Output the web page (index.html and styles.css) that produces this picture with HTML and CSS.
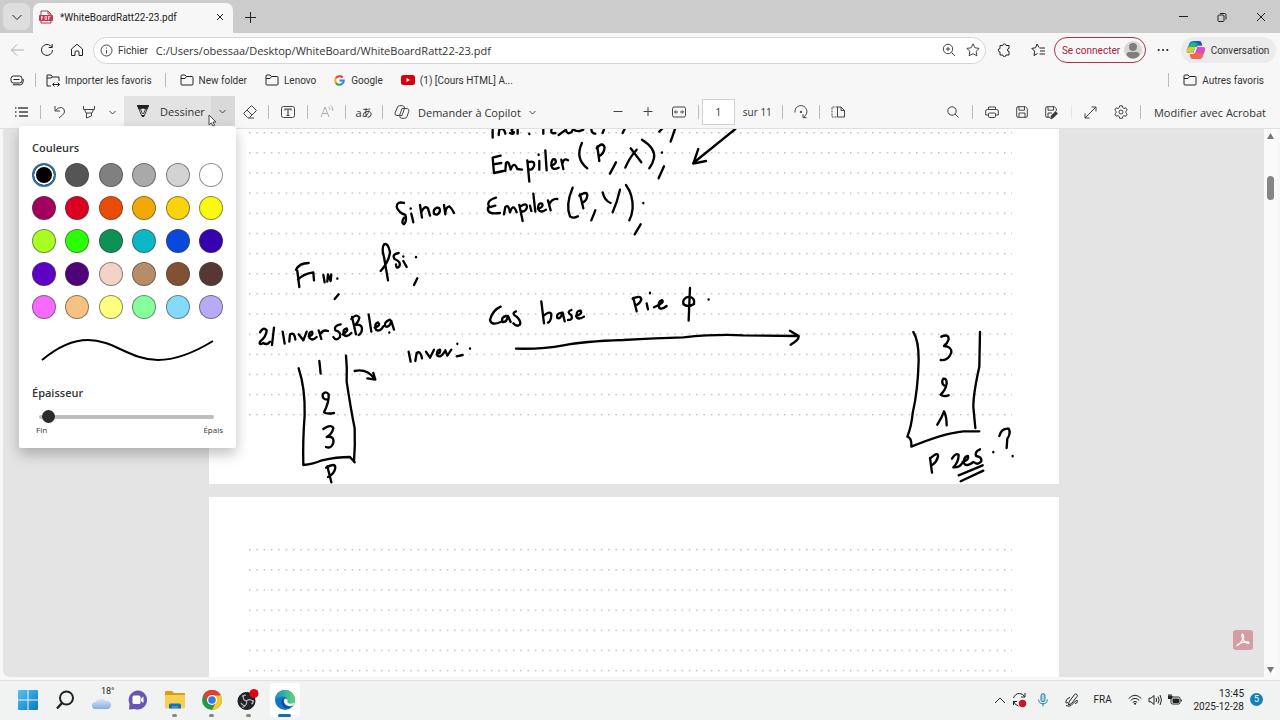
FILE: index.html
```html
<!DOCTYPE html>
<html lang="fr">
<head>
  <meta charset="UTF-8">
  <meta name="viewport" content="width=device-width, initial-scale=1.0">
  <title>WhiteBoardRatt22-23.pdf</title>
  <link rel="stylesheet" href="styles.css">
</head>
<body>

<!-- Tab strip -->
<header class="tabs">
  <button class="tab-menu" aria-label="Onglets"><svg class="dark" width="12" height="12" viewBox="0 0 12 12"><path d="M1.500 4L6 8.500 10.500 4"/></svg></button>
  <div class="tab">
    <svg width="14" height="14" viewBox="0 0 14 14"><path d="M2 1h7l3 3v9H2z" fill="#fff" stroke="#a33a48"/><path d="M9 1v3h3" stroke="#a33a48"/><rect x="0" y="5" width="14" height="6" rx="1" fill="#c9354a" stroke="none"/><path d="M2.500 10V6.500h1v1.500h-1M6 6.500v3h1.500v-3zM9.500 10V6.500h2M9.500 8h1.500" stroke="#fff" stroke-width=".7"/></svg>
    <span class="tab-title">*WhiteBoardRatt22-23.pdf</span>
    <button class="icon-btn small" aria-label="Fermer l'onglet"><svg class="dark" width="8" height="8" viewBox="0 0 8 8"><path d="M1 1l6 6M7 1l-6 6"/></svg></button>
  </div>
  <button class="icon-btn new-tab" aria-label="Nouvel onglet"><svg class="dark" width="13" height="13" viewBox="0 0 13 13"><path d="M6.500 1v11M1 6.500h11"/></svg></button>
  <div class="window-buttons">
    <button aria-label="Réduire"><svg class="dark" width="10" height="10" viewBox="0 0 10 10"><path d="M1 4.500h9"/></svg></button>
    <button aria-label="Restaurer"><svg class="dark" width="10" height="10" viewBox="0 0 10 10"><path d="M3 1.500h4.500a1.500 1.500 0 0 1 1.500 1.500v4.500"/><rect x="1" y="3" width="6" height="6.500" rx="1"/></svg></button>
    <button aria-label="Fermer"><svg class="dark" width="10" height="10" viewBox="0 0 10 10"><path d="M1 1l8 8M9 1l-8 8"/></svg></button>
  </div>
</header>

<!-- Address bar -->
<div class="nav">
  <button class="icon-btn disabled" aria-label="Précédent"><svg width="14" height="14" viewBox="0 0 14 14"><path d="M14 7H1.500M7 1.500L1.500 7 7 12.500"/></svg></button>
  <button class="icon-btn" aria-label="Actualiser"><svg class="dark" width="14" height="14" viewBox="0 0 14 14"><path d="M12.500 7A5.500 5.500 0 1 1 10.500 2.700L12 4.200M12.200 1v3.500H8.700"/></svg></button>
  <button class="icon-btn" aria-label="Accueil"><svg class="dark" width="14" height="14" viewBox="0 0 14 14"><path d="M1.500 6L7 1.200 12.500 6v6.500H9V9a1 1 0 0 0-1-1H6a1 1 0 0 0-1 1v3.500H1.500z" stroke-linejoin="round"/></svg></button>
  <div class="address">
    <svg width="13" height="13" viewBox="0 0 13 13"><circle cx="6.500" cy="6.500" r="5.500"/><path d="M6.500 6v3.500M6.500 3.500v1"/></svg>
    <label class="scheme" for="url">Fichier</label>
    <input id="url" class="url" type="text" value="C:/Users/obessaa/Desktop/WhiteBoard/WhiteBoardRatt22-23.pdf">
    <button class="icon-btn narrow" aria-label="Zoom"><svg width="14" height="14" viewBox="0 0 14 14"><circle cx="6" cy="6" r="4.700"/><path d="M9.500 9.500L13 13M6 3.800v4.400M3.800 6h4.400"/></svg></button>
    <button class="icon-btn narrow" aria-label="Ajouter aux favoris"><svg width="14" height="14" viewBox="0 0 14 14"><path d="M7 .8l1.900 4 4.300.6-3.100 3 .8 4.400L7 10.700l-3.900 2.100.8-4.400-3.100-3 4.300-.6z" stroke-linejoin="round"/></svg></button>
  </div>
  <button class="icon-btn" aria-label="Extensions"><svg class="dark" width="14" height="14" viewBox="0 0 14 14"><path d="M4 2.500h1.800a1.600 1.600 0 0 1 3.200 0H12V5.500a1.500 1.500 0 0 0 0 3V12H9a1.600 1.600 0 0 1-3.200 0H3V9a1.700 1.700 0 0 1 0-3.400V2.500z" stroke-linejoin="round"/></svg></button>
  <button class="icon-btn favorites" aria-label="Favoris"><svg class="dark" width="14" height="14" viewBox="0 0 14 14"><path d="M8 4.500L6 1 4.500 4.800.8 5.400l2.800 2.800-.6 4.300 3.500-2M8.500 5H14M9 8h5M8.500 11H14" stroke-linejoin="round"/></svg></button>
  <button class="sign-in">Se connecter
    <svg width="18" height="18" viewBox="0 0 18 18"><circle cx="9" cy="9" r="9" fill="#d8d5d2" stroke="none"/><circle cx="9" cy="6" r="4" fill="#807d7a" stroke="none"/><path d="M2.500 14a3 3 0 0 1 3-3h7a3 3 0 0 1 3 3Q13 17.500 9 17.500T2.500 14z" fill="#807d7a" stroke="none"/></svg>
  </button>
  <button class="icon-btn more" aria-label="Plus"><svg width="12" height="4" viewBox="0 0 12 4"><g fill="#222" stroke="none"><circle cx="1.700" cy="2" r="1.100"/><circle cx="6" cy="2" r="1.100"/><circle cx="10.300" cy="2" r="1.100"/></g></svg></button>
  <button class="chat">
    <svg width="20" height="20" viewBox="0 0 20 20"><g stroke="none"><path d="M7 1h6q2 0 2.500 2l.7 2.500h-3q-2 0-2.500 2L9 13H3Q0 13 1 9.500L3.500 3Q4.500 1 7 1z" fill="#1686d9"/><path d="M3.500 5L6 3h5l-2.500 9H3Q0 12 1 9z" fill="#28b57c"/><path d="M2 12.500Q4 13 7 13l1-3 1-3H4L1.500 8Q0 12 2 12.500z" fill="#e5c531"/><path d="M13 19H7q-2 0-2.500-2L3.800 14.500h3q2 0 2.500-2L11 7h6q3 0 2 3.500L16.500 17q-1 2-3.500 2z" fill="#d74dc4"/><path d="M13 19H7q-2 0-2.500-2L3.800 14h3q2 0 2.500-2l3 1 5 .8L16.500 17q-1 2-3.500 2z" fill="#f2684c"/><path d="M7 1h6q2 0 2.500 2l.7 2.500h-3L11 3z" fill="#2453c8"/><path d="M11 7l-2 6H7.500l2-6z" fill="#fff"/></g></svg>
    Conversation
  </button>
</div>

<!-- Bookmarks -->
<nav class="bookmarks">
  <button class="icon-btn" aria-label="Espaces"><svg class="dark" width="14" height="11" viewBox="0 0 14 11"><rect x="1" y="1" width="11" height="7" rx="2.500"/><path d="M3.500 4.500h6M3 9.800h7.500q2.700-.5 2.700-3.500V4"/></svg></button>
  <span class="sep"></span>
  <a class="import" href="#"><svg class="dark" width="14" height="13" viewBox="0 0 14 13"><path d="M5 12H1V1h4l1.500 2H13v4M1 4h4l1.500-1M13.500 10.500H7M8.500 8.500l-2 2 2 2M11.500 8.500l2 2-2 2"/></svg>Importer les favoris</a>
  <span class="sep"></span>
  <a class="folder" href="#"><svg class="dark" width="14" height="12" viewBox="0 0 14 12"><path d="M1 2a1 1 0 0 1 1-1h3l1.500 1.500H12a1 1 0 0 1 1 1V10a1 1 0 0 1-1 1H2a1 1 0 0 1-1-1zM1 4.500h4l1.500-2" stroke-linejoin="round"/></svg>New folder</a>
  <a href="#"><svg class="dark" width="14" height="12" viewBox="0 0 14 12"><path d="M1 2a1 1 0 0 1 1-1h3l1.500 1.500H12a1 1 0 0 1 1 1V10a1 1 0 0 1-1 1H2a1 1 0 0 1-1-1zM1 4.500h4l1.500-2" stroke-linejoin="round"/></svg>Lenovo</a>
  <a class="google" href="#"><svg width="11" height="11" viewBox="0 0 12 12" stroke-width="2.200"><path d="M9.500 2.700A4.700 4.700 0 0 0 2 3.600" stroke="#e34133"/><path d="M2 3.600a4.700 4.700 0 0 0 0 4.800" stroke="#f3b605"/><path d="M2 8.400a4.700 4.700 0 0 0 7 1.200" stroke="#32a350"/><path d="M9 9.600A4.700 4.700 0 0 0 10.700 6H6" stroke="#3d7de8"/></svg>Google</a>
  <a class="youtube" href="#"><svg width="14" height="10" viewBox="0 0 14 10"><rect width="14" height="10" rx="2.500" fill="#d9000d" stroke="none"/><path d="M5.500 3v4L9 5z" fill="#fff" stroke="none"/></svg>(1) [Cours HTML] A...</a>
  <span class="sep last"></span>
  <a class="others" href="#"><svg class="dark" width="14" height="12" viewBox="0 0 14 12"><path d="M1 2a1 1 0 0 1 1-1h3l1.500 1.500H12a1 1 0 0 1 1 1V10a1 1 0 0 1-1 1H2a1 1 0 0 1-1-1zM1 4.500h4l1.500-2" stroke-linejoin="round"/></svg>Autres favoris</a>
</nav>

<!-- PDF toolbar -->
<div class="pdf-bar">
  <div class="group">
    <button class="tool" aria-label="Sommaire"><svg width="14" height="12" viewBox="0 0 14 12"><path d="M4 2h10M5 6h9M5 10h9M1 2h1.500M1 6h1.500M1 10h1.500" stroke-width="1.300"/></svg></button>
    <span class="sep"></span>
    <button class="tool" aria-label="Annuler"><svg width="14" height="14" viewBox="0 0 14 14"><path d="M2 1v5h5M2.500 5.500Q5 2 8.500 2.500q3.500 1 3 4.500-.5 1.500-2 3L6 13"/></svg></button>
    <button class="tool pen" aria-label="Surligner"><svg width="14" height="14" viewBox="0 0 14 14"><path d="M1.500 1v3.500h11V1M2.500 4.500L4 8h6l1.500-3.500M4.500 8v5l5-2V8" stroke-linejoin="round"/></svg></button>
    <button class="chevron" aria-label="Options de surlignage"><svg width="7" height="5" viewBox="0 0 7 5"><path d="M.5 1l3 3 3-3"/></svg></button>
    <button class="draw">
      <svg width="14" height="14" viewBox="0 0 14 14"><path d="M1.500 1.500h11L8 12.500H6zM4.500 5l2 5M9.500 5l-2 5"/><path d="M1.500 1.500h11L11 5Q7 3 3 5z" fill="#222" stroke="#222"/><path d="M6 12h2" stroke="#222" stroke-width="2"/></svg>
      Dessiner
      <span class="draw-more"><svg width="7" height="5" viewBox="0 0 7 5"><path d="M.5 1l3 3 3-3"/></svg></span>
    </button>
    <button class="tool" aria-label="Gomme"><svg width="14" height="14" viewBox="0 0 14 14"><path d="M9 1l4 4q.5.500 0 1L6.500 12.500q-1 1-2 0L1 9q-.5-.5 0-1l7-7q.5-.5 1 0zM4 5l5 5M5.500 13H11" stroke-linejoin="round"/></svg></button>
    <span class="sep tight"></span>
    <button class="tool" aria-label="Texte"><svg width="14" height="12" viewBox="0 0 14 12"><rect x=".5" y=".5" width="13" height="11" rx="2"/><path d="M4 4.500V3h6v1.500M7 3v6.500M5.500 9.500h3" stroke-width="1.200"/></svg></button>
    <span class="sep"></span>
    <button class="tool disabled" aria-label="Lecture à voix haute"><svg width="14" height="14" viewBox="0 0 14 14"><path d="M1 12l4-10 4 10M2.500 8.500h5M8.500 2q1.500 1 1.500 3M10.500.5Q13 2.500 13 6"/></svg></button>
    <span class="sep tight"></span>
    <button class="tool translate" aria-label="Traduire">aあ</button>
    <span class="sep"></span>
    <button class="copilot">
      <svg width="16" height="14" viewBox="0 0 16 14"><path d="M10.500 3L10 1.500Q9.700.7 8.500.7H5.500Q4 .7 3.500 2L1 8Q.5 10.500 3 10.500h2.500L8 3.500H12q3.500 0 2.800 2.800L13 11.500Q12.500 13.300 10.500 13.300H7.500Q6.300 13.300 6 12l-.5-1.500M8 10.500L10.500 3.500M8 10.500H6" stroke-linejoin="round"/></svg>
      Demander à Copilot
      <svg width="7" height="5" viewBox="0 0 7 5"><path d="M.5 1l3 3 3-3"/></svg>
    </button>
  </div>
  <div class="group paging">
    <button class="tool" aria-label="Zoom arrière"><svg width="10" height="10" viewBox="0 0 10 10"><path d="M.5 4.500h9"/></svg></button>
    <button class="tool" aria-label="Zoom avant"><svg width="10" height="10" viewBox="0 0 10 10"><path d="M.5 4.500h9M5 0v9"/></svg></button>
    <button class="tool fit" aria-label="Ajuster à la largeur"><svg width="14" height="12" viewBox="0 0 14 12"><rect x=".5" y="1" width="13" height="10" rx="1.500"/><path d="M2.500 6H6M8 6h3.500M4.200 4.300L2.500 6l1.700 1.700M9.800 4.300L11.500 6 9.800 7.700"/></svg></button>
    <span class="sep"></span>
    <input class="page-number" type="text" value="1" id="page">
    <label class="page-count" for="page">sur 11</label>
    <span class="sep"></span>
    <button class="tool turn" aria-label="Pivoter"><svg width="14" height="14" viewBox="0 0 14 14"><path d="M1 7.500A6 6 0 1 1 9.500 12M12.500 12.700H9V9.200"/><circle cx="7" cy="7" r=".8" fill="#333"/></svg></button>
    <span class="sep"></span>
    <button class="tool turn" aria-label="Mode Page"><svg width="14" height="12" viewBox="0 0 14 12"><path d="M6.500 1H1v10h5.500" stroke-dasharray="2 1"/><path d="M6.500 1H10l3.500 3.500V11h-7zM10 1v3.500h3.500"/></svg></button>
  </div>
  <div class="group actions">
    <button class="tool" aria-label="Rechercher"><svg width="12" height="12" viewBox="0 0 12 12"><circle cx="5" cy="5" r="4.200"/><path d="M8 8l3.500 3.500"/></svg></button>
    <span class="sep"></span>
    <button class="tool" aria-label="Imprimer"><svg width="14" height="12" viewBox="0 0 14 12"><path d="M3.500 3.500V1h7v2.500M3 9H.7V5q0-1.500 1.500-1.500h9.600q1.500 0 1.500 1.500v4H11"/><rect x="3.500" y="7" width="7" height="4.500" rx="1"/></svg></button>
    <button class="tool" aria-label="Enregistrer"><svg width="12" height="12" viewBox="0 0 12 12"><path d="M.7 2A1.300 1.300 0 0 1 2 .7h7.500l1.800 2V10a1.300 1.300 0 0 1-1.300 1.300H2A1.300 1.300 0 0 1 .7 10zM3 .7v3.500h5.500V.7M3 11.300V7h6v4.300"/></svg></button>
    <button class="tool" aria-label="Enregistrer sous"><svg width="13" height="13" viewBox="0 0 13 13"><path d="M5 11.300H2A1.300 1.300 0 0 1 .7 10V2A1.300 1.300 0 0 1 2 .7h7.500l1.800 2V5M3 .7v3.500h5.500V.7M3 11.300V7h4"/><path d="M6 12.500l.5-2.500 4-4 1.500 1.500-4 4z" fill="#222" stroke-width="1.500"/></svg></button>
    <span class="sep faint"></span>
    <button class="tool" aria-label="Plein écran"><svg width="13" height="13" viewBox="0 0 13 13"><path d="M1 12L12 1M7.500 1H12v4.500M1 7.500V12h4.500"/></svg></button>
    <button class="tool" aria-label="Paramètres"><svg width="14" height="14" viewBox="0 0 14 14"><path d="M5.700.8h2.600l.5 1.900 1.200.7 1.900-.6 1.300 2.300-1.400 1.300v1.300l1.400 1.300-1.300 2.200-1.900-.5-1.200.7-.5 1.900H5.700l-.5-1.900-1.200-.7-1.900.5L.8 9l1.400-1.300V6.400L.8 5.100l1.300-2.300 1.900.6 1.200-.7z" stroke-linejoin="round"/><circle cx="7" cy="7" r="2"/></svg></button>
    <span class="sep"></span>
    <button class="acrobat">Modifier avec Acrobat</button>
  </div>

  <!-- Pen options -->
  <div class="pen-panel">
    <h2>Couleurs</h2>
    <div class="swatches">
      <input type="radio" name="color" class="black" aria-label="Noir" checked>
      <input type="radio" name="color" class="gray-1" aria-label="Gris foncé">
      <input type="radio" name="color" class="gray-2" aria-label="Gris">
      <input type="radio" name="color" class="gray-3" aria-label="Gris moyen">
      <input type="radio" name="color" class="gray-4" aria-label="Gris clair">
      <input type="radio" name="color" class="white" aria-label="Blanc">
      <input type="radio" name="color" class="burgundy" aria-label="Bordeaux">
      <input type="radio" name="color" class="red" aria-label="Rouge">
      <input type="radio" name="color" class="orange" aria-label="Orange">
      <input type="radio" name="color" class="amber" aria-label="Ambre">
      <input type="radio" name="color" class="gold" aria-label="Or">
      <input type="radio" name="color" class="yellow" aria-label="Jaune">
      <input type="radio" name="color" class="lime" aria-label="Citron vert">
      <input type="radio" name="color" class="green" aria-label="Vert">
      <input type="radio" name="color" class="emerald" aria-label="Émeraude">
      <input type="radio" name="color" class="teal" aria-label="Turquoise">
      <input type="radio" name="color" class="blue" aria-label="Bleu">
      <input type="radio" name="color" class="indigo" aria-label="Indigo">
      <input type="radio" name="color" class="violet" aria-label="Violet">
      <input type="radio" name="color" class="purple" aria-label="Pourpre">
      <input type="radio" name="color" class="skin" aria-label="Beige rosé">
      <input type="radio" name="color" class="tan" aria-label="Beige">
      <input type="radio" name="color" class="brown" aria-label="Marron">
      <input type="radio" name="color" class="umber" aria-label="Marron foncé">
      <input type="radio" name="color" class="pink" aria-label="Rose">
      <input type="radio" name="color" class="peach" aria-label="Pêche">
      <input type="radio" name="color" class="lemon" aria-label="Jaune clair">
      <input type="radio" name="color" class="mint" aria-label="Menthe">
      <input type="radio" name="color" class="sky" aria-label="Bleu ciel">
      <input type="radio" name="color" class="lavender" aria-label="Lavande">
    </div>
    <svg class="preview" width="190" height="32" viewBox="0 0 190 32"><path d="M10 26Q34 6 56 6C82 6 98 26 126 26Q150 26 181 7"/></svg>
    <h2><label for="thickness">Épaisseur</label></h2>
    <input class="thickness" id="thickness" type="range" min="0" max="100" value="2">
    <div class="ends"><span>Fin</span><span>Épais</span></div>
  </div>
  <svg class="cursor" width="9" height="13" viewBox="0 0 9 13"><path d="M1 1v10l2.300-2.200L5 12l1.500-.8L5 8h3z" fill="#fff"/></svg>
</div>

<!-- Document -->
<main class="viewer">
  <div class="pages">
    <div class="page first">
      <svg class="sheet" width="850" height="355" viewBox="209 129 850 355">
        <defs>
          <pattern id="dots" x="249" y="132" width="7.330" height="20.140" patternUnits="userSpaceOnUse"><rect width="1.400" height="1.400" fill="#b8b8b8" stroke="none"/></pattern>
        </defs>
        <rect x="249" y="132" width="763" height="285" fill="url(#dots)" stroke="none"/>
        <!-- pen strokes -->
        <g class="ink" transform="translate(370 125) scale(.3333)">
          <path d="M368 12V38M386 30L388 14Q402 6 406 26M428 12Q420 16 432 22Q430 30 420 24M443 14v12M478 26v1M520 14V26M545 12Q540 28 556 24M566 30L588 14Q590 30 604 22L610 12Q620 24 640 14M664 10Q664 26 676 26M702 14l-4 10M764 12l-6 12M876 12l-8 8M915 12L902 50"/>
          <path d="M1096 12L970 114M985 72L970 116L1008 108"/>
          <path d="M392 92L368 98L372 144L400 138M370 118L394 114M406 138L408 114Q416 104 422 134Q432 106 442 132L456 134M472 106L478 170M474 112Q496 104 492 124Q486 138 474 132M508 108V134M506 88v2M526 76L530 136M544 122Q562 116 556 104Q544 98 544 122Q548 138 566 128M574 104L580 132M578 114Q582 98 594 106"/>
          <path d="M636 54Q614 100 652 130M682 64L688 108M680 70Q698 48 704 68Q702 88 686 94M738 112L720 146M782 70L814 112M800 74Q778 98 766 128M816 44Q858 70 852 100Q848 118 838 130M876 82v1M882 124L866 160"/>
          <path d="M102 234Q80 228 80 246Q86 264 106 270Q112 286 102 298Q92 296 102 278M124 266L130 292M122 250v1M150 240L156 278M154 262Q162 240 174 250L180 272M202 248Q188 252 192 266Q204 274 210 258Q210 246 200 248M222 240L226 268Q226 246 238 244Q246 250 252 264"/>
          <path d="M378 218Q350 226 356 242M376 242L354 248Q350 270 390 264M402 268L406 246Q416 236 420 262Q430 232 440 262M448 240L458 288M452 244Q474 230 470 250Q462 264 454 258M480 242L484 258M490 206L496 260M504 252Q522 246 516 236Q504 232 504 252Q512 266 528 254M534 226L542 256M538 238Q546 220 562 222"/>
          <path d="M608 188Q586 240 600 274Q610 282 624 274M630 208L640 250M628 212Q652 196 652 212Q650 228 636 234M676 256L664 286M698 202Q704 228 722 234M750 194Q742 230 728 262M768 180Q790 210 788 250Q786 272 778 286M820 234v1M812 298L794 328"/>
          <path d="M32 438Q56 412 60 382Q54 352 42 358Q34 370 42 396L54 466M86 384Q64 388 74 402Q94 410 88 424Q78 434 78 418M100 408L110 426M100 394v1M138 396v1M142 460L132 480"/>
        </g>
        <g class="ink" transform="translate(240 235) scale(.3333)">
          <path d="M168 104Q178 84 206 84M172 108L178 156M174 134Q190 116 220 112L222 136M250 120L254 142M262 140L264 118L272 138L274 118M292 130v1M296 178L284 192"/>
          <path d="M60 292Q70 274 80 286Q80 304 60 320Q56 332 70 324Q80 332 90 320M102 278L96 330M128 290L134 326M148 320L150 298Q164 290 166 314M176 298L190 316L200 290M206 304Q222 300 216 290Q204 292 208 308Q216 320 230 306M236 286L244 312M240 298Q250 282 264 288M302 268Q280 272 286 286Q304 290 300 306Q288 320 280 306M308 298Q326 288 320 280Q306 282 312 300Q322 308 334 294M336 246L348 298M334 252Q350 234 358 248Q354 264 344 270Q364 266 366 280Q366 296 356 300M386 238L394 290M404 278Q424 272 414 262Q402 266 408 284Q420 292 430 274M450 254Q430 262 436 274Q448 280 454 258L462 284M448 292v1"/>
          <path d="M176 400Q196 460 194 540Q188 620 190 690Q220 688 246 676Q290 666 330 666L344 682M318 362Q322 400 320 440Q332 520 344 580Q346 630 342 680M238 378L242 416M344 408Q380 400 402 430M400 414L406 434L382 430"/>
          <path d="M262 494Q246 494 248 478Q258 466 266 478Q268 500 252 532Q260 538 282 534M250 582Q274 566 280 580Q276 598 260 606Q284 602 280 624Q274 642 258 636M262 694L274 742M258 698Q286 682 286 698Q284 716 264 726"/>
          <path d="M506 350L512 380M526 378L530 354Q542 346 546 370M558 350L570 368L582 344M590 358Q604 354 600 344Q588 346 592 362Q602 370 614 350M616 346L622 362L634 344M652 326v1M650 364L668 360M690 340v1"/>
        </g>
        <g class="ink" transform="translate(470 280) scale(.3333)">
          <path d="M92 80Q68 90 60 120Q64 138 92 126M108 108Q92 112 98 126Q110 128 114 108L122 126M138 94Q122 100 140 110Q154 124 150 134Q140 142 130 130M214 64L222 130M222 106Q240 92 244 102Q244 124 234 128M276 98Q258 100 262 114Q272 118 278 98L284 124M304 90Q288 96 304 106Q310 120 294 120M318 108Q338 102 332 92Q318 90 320 112Q328 120 342 110"/>
          <path d="M490 54L500 94M488 56Q512 44 514 58Q510 72 496 76M530 70L534 88M540 38v2M552 82L560 78Q584 68 576 60Q562 64 568 84Q576 90 590 78M660 24L656 122M658 50Q636 54 640 72Q654 84 672 72Q676 54 658 50M716 58v1"/>
          <path d="M138 206Q220 208 280 196Q340 184 460 180Q560 174 640 172Q740 162 820 166L984 168M960 152L986 168Q988 180 962 194"/>
        </g>
        <g class="ink" transform="translate(880 310) scale(.3333)">
          <path d="M100 66Q116 90 116 150Q114 240 98 310Q94 350 82 380Q96 384 94 410Q190 370 250 364L298 364M300 66L298 170Q280 250 280 290L286 354"/>
          <path d="M184 80Q206 70 206 88Q202 100 192 108Q216 110 214 128Q204 154 182 150M192 226Q182 218 190 206Q200 204 200 220Q198 238 182 254Q194 262 206 256M172 344Q186 322 192 304Q200 320 200 346"/>
          <path d="M150 444L156 488M150 446Q176 422 174 440Q170 456 158 464M216 446Q226 428 236 434Q236 456 220 472Q238 474 248 458M248 456Q268 450 264 438Q250 440 252 460Q260 472 280 456M300 418Q284 424 288 438Q306 440 304 454Q294 466 284 458M236 496L308 466M242 514L310 482M340 426v1M358 378Q364 354 386 356Q394 370 382 386L380 414M398 438v1"/>
        </g>
      </svg>
    </div>
    <div class="page">
      <svg class="sheet" width="850" height="355" viewBox="209 497 850 355">
        <defs>
          <pattern id="dots2" x="249" y="549" width="7.330" height="20.140" patternUnits="userSpaceOnUse"><rect width="1.400" height="1.400" fill="#b8b8b8" stroke="none"/></pattern>
        </defs>
        <rect x="249" y="549" width="763" height="285" fill="url(#dots2)" stroke="none"/>
      </svg>
    </div>
    <button class="acrobat-badge" aria-label="Adobe Acrobat"><svg width="14" height="14" viewBox="0 0 14 14"><path d="M1 12.500Q3 12 6 7.500T6.500 1Q5 2 7 6t5.500 4.500q1-.5 0-1.500-3-.5-7 .8T1 12.500z" stroke="#fff" stroke-width="1.200"/></svg></button>
  </div>
  <div class="scrollbar">
    <svg width="7" height="6" viewBox="0 0 7 6"><path d="M0 6l3.500-6L7 6z"/></svg>
    <span class="thumb"></span>
    <svg width="7" height="6" viewBox="0 0 7 6"><path d="M0 0l3.500 6L7 0z"/></svg>
  </div>
</main>

<!-- Taskbar -->
<footer class="taskbar">
  <div class="apps">
    <button aria-label="Démarrer"><svg width="20" height="20" viewBox="0 0 20 20"><defs><linearGradient id="win" x2="1" y2="1"><stop stop-color="#54c4ee"/><stop offset="1" stop-color="#0b78c4"/></linearGradient></defs><path d="M1 0h8.500v9.500H0V1q0-1 1-1zM10.500 0H19q1 0 1 1v8.500h-9.500zM0 10.500h9.500V20H1q-1 0-1-1zM10.500 10.500H20V19q0 1-1 1h-8.500z" fill="url(#win)" stroke="none"/></svg></button>
    <button aria-label="Rechercher"><svg width="20" height="20" viewBox="0 0 20 20"><circle cx="11.500" cy="8" r="6.500" stroke="#222" stroke-width="2"/><path d="M7 13l-5 5.500" stroke="#222" stroke-width="2.500"/></svg></button>
    <button aria-label="Météo"><svg class="weather" width="22" height="14" viewBox="0 0 22 14"><defs><linearGradient id="cloud" y2="1" x2="0"><stop stop-color="#dce9fb"/><stop offset="1" stop-color="#86aede"/></linearGradient></defs><path d="M4 13a4 4 0 0 1 0-7q1 0 1.500.3A6 6 0 0 1 16 5a4 4 0 1 1 2 8z" fill="url(#cloud)" stroke="none"/></svg><span class="temp">18°</span></button>
    <button aria-label="Conversation"><svg width="20" height="20" viewBox="0 0 20 20"><path d="M10 .5A9.500 9.500 0 1 1 6.500 19L1 19.500 1.500 14A9.500 9.500 0 0 1 10 .5z" fill="#6a54b5" stroke="none"/><rect x="4.500" y="5.500" width="8" height="8.500" rx="1.500" fill="#fff" stroke="none"/><path d="M13 8.500l2.500-2v6.500L13 11z" fill="#fff" stroke="none"/></svg></button>
    <button class="running" aria-label="Explorateur de fichiers"><svg width="20" height="20" viewBox="0 0 20 20"><path d="M0 2q0-1 1-1h6l2 2h10q1 0 1 1v4H0z" fill="#d89c17" stroke="none"/><path d="M0 5h20v12q0 1.500-1.500 1.500h-17Q0 18.500 0 17z" fill="#f9cf51" stroke="none"/><path d="M4 18.500V15q0-1.500 1.500-1.500h9q1.500 0 1.500 1.500v3.500z" fill="#1474b8" stroke="none"/><path d="M7 17h6" stroke="#5fb4e8"/></svg></button>
    <button class="running" aria-label="Chrome"><svg width="20" height="20" viewBox="0 0 20 20"><g stroke="none"><circle cx="10" cy="10" r="10" fill="#27964a"/><path d="M10 10L1.300 5A10 10 0 0 1 18.700 5z" fill="#dc4132"/><path d="M10 5.500h8.900A10 10 0 0 1 10 20l4-7.700z" fill="#f8c92d"/><path d="M1.300 5L6 12.500 7 6z" fill="#dc4132"/><circle cx="10" cy="10" r="5" fill="#fff"/><circle cx="10" cy="10" r="3.800" fill="#3578e5"/></g></svg></button>
    <button class="running" aria-label="OBS Studio"><svg width="22" height="22" viewBox="0 0 22 22"><circle cx="9.500" cy="12" r="8.500" fill="#24252a" stroke="#111"/><path d="M9.500 12Q5 11 6.500 6M9.500 12q4-3 7 1M9.500 12q1 4-4 6.500M9 6.500q-2-1-4 1M14.500 15q2-1 1.500-4M8 17q-3-.5-4-3" stroke="#bbb" stroke-width="1.200"/><circle cx="17" cy="4.500" r="4.500" fill="#dd0615" stroke="none"/></svg></button>
    <button class="running active" aria-label="Edge"><svg width="20" height="20" viewBox="0 0 20 20"><defs><linearGradient id="edge" x2="1" y2="0"><stop stop-color="#168fd2"/><stop offset="1" stop-color="#5fd869"/></linearGradient></defs><g stroke="none"><circle cx="10" cy="10" r="10" fill="#1276c5"/><path d="M0 10A10 10 0 0 1 20 9.500Q20 13.500 15.500 13.500 12 13.500 12.500 11.500 13 7.500 8.500 6.500 3 6.500 0 10z" fill="url(#edge)"/><path d="M8 8Q4.500 13 9 17q4 3 9-1-3 1.500-6.500 0Q7.500 13.500 8.500 9.500z" fill="#124a93"/><path d="M9 10q1-2 3-1 1 1 .5 2.500 0 2 3 2 3 0 4-1.500-.5 2-1.500 3.500-3 1.500-6 0Q8.500 13.500 9 10z" fill="#f3f6f8"/></g></svg></button>
  </div>
  <div class="tray">
    <svg class="dark" width="12" height="8" viewBox="0 0 12 8"><path d="M1 7l5-5 5 5"/></svg>
    <svg class="dark" width="15" height="16" viewBox="0 0 15 16"><path d="M1.500 6Q3 1.500 7.500 1.500q3.500 0 5 3M13 1v4H9M1.500 9q1 4 5 5M1.500 13V9.500H5"/><circle cx="10.500" cy="11.500" r="3.700" fill="#d01522" stroke="none"/></svg>
    <svg class="mic" width="10" height="14" viewBox="0 0 10 14"><rect x="3" y=".7" width="4" height="8" rx="2" fill="#a8d5e8" stroke="#247aa5"/><path d="M.7 6.500q0 4.300 4.300 4.300t4.300-4.300M5 11v2.500" stroke="#247aa5"/></svg>
    <svg class="pen-icon dark" width="14" height="14" viewBox="0 0 14 14"><path d="M4 9L9.500 1.500q1-1 2.200-.2t.3 2.200L6.500 10.500 3.500 12zM5 4.500Q2 5 1 8T3 9.500M1 12.500q3 1.500 5 0L10.500 8q2.500-1.500 2 .5t-2.500 2" stroke-linejoin="round"/></svg>
    <span class="lang">FRA</span>
    <svg class="dark" width="14" height="11" viewBox="0 0 14 11"><path d="M.7 4.500q6.300-6.500 12.600 0M2.700 6.500q4.300-4.300 8.600 0M4.800 8.400q2.200-2 4.400 0"/><circle cx="7" cy="9.800" r="1" fill="#222" stroke="none"/></svg>
    <svg class="dark" width="14" height="12" viewBox="0 0 14 12"><path d="M1 4.200h2L6 1.500v9L3 7.800H1zM8 4q1.300 2 0 4M10 2.500q2.300 3.500 0 7M12 1q3 5 0 10"/></svg>
    <svg class="battery dark" width="14" height="11" viewBox="0 0 14 11"><rect x="3" y="3" width="9" height="7" rx="1.500"/><path d="M5 5h5.500v3.500H5zM0 2h4v2.500H0z" fill="#222"/><path d="M1 0v5M3 0v5M13.300 5.500v2"/></svg>
    <div class="clock"><span>13:45</span><span>2025-12-28</span></div>
    <span class="count">5</span>
  </div>
</footer>

</body>
</html>
```
FILE: styles.css
```css
* {
  box-sizing: border-box;
}

body {
  margin: 0;
  height: 100vh;
  display: flex;
  flex-direction: column;
  overflow: hidden;
  background: #f7f7f7;
  color: #333;
  font-family: Roboto, "Open Sans", "Noto Sans CJK JP", sans-serif;
  font-size: 10px;
}

button, input {
  font: inherit;
  color: inherit;
  border: 0;
  padding: 0;
  background: none;
}

button {
  display: flex;
  align-items: center;
  justify-content: center;
  white-space: nowrap;
}

a {
  color: inherit;
  text-decoration: none;
}

svg {
  flex: none;
  fill: none;
  stroke: #444;
}

svg.dark {
  stroke: #222;
}

.icon-btn {
  flex: none;
  width: 30px;
  height: 28px;
}

.narrow {
  width: 24px;
}

.small {
  width: 20px;
  height: 20px;
}

.disabled {
  opacity: 0.4;
}

.sep {
  flex: none;
  width: 1px;
  height: 14px;
  background: #bbb;
}

/* Tab strip */
.tabs {
  flex: none;
  display: flex;
  align-items: flex-end;
  height: 33px;
  padding-left: 3px;
  background: #ccc;
}

.tab-menu {
  width: 27px;
  height: 27px;
  margin: 0 3px 3px 0;
  border-radius: 7px;
  background: #dedede;
}

.tab {
  display: flex;
  align-items: center;
  width: 200px;
  height: 30px;
  padding: 0 3px 2px 6px;
  border-radius: 7px 7px 0 0;
  background: #f7f7f7;
}

.tab-title {
  flex: 1;
  margin-left: 7px;
  color: #222;
}

.new-tab {
  margin: 0 0 2px 2px;
}

.window-buttons {
  display: flex;
  align-self: center;
  margin-left: auto;
}

.window-buttons button {
  width: 39px;
  height: 28px;
}

/* Address bar */
.nav {
  flex: none;
  display: flex;
  align-items: center;
  height: 34px;
  padding: 0 4px 0 2px;
}

.address {
  flex: 1;
  display: flex;
  align-items: center;
  height: 27px;
  margin: 0 3px 0 1px;
  padding: 0 0 0 6px;
  border: 1px solid #d5d5d5;
  border-radius: 14px;
  background: #fff;
}

.scheme {
  margin: 0 8px 0 5px;
}

.url {
  flex: 1;
  min-width: 0;
  font-family: "Open Sans", "Noto Sans", sans-serif;
  font-size: 11px;
}

.favorites {
  margin-left: 4px;
}

.sign-in {
  gap: 4px;
  width: 92px;
  height: 26px;
  margin-left: 1px;
  padding-left: 4px;
  border: 1px solid #ad3548;
  border-radius: 13px;
  color: #a42640;
}

.more {
  margin: 0 3px 0 2px;
}

.chat {
  gap: 5px;
  width: 95px;
  height: 26px;
  padding-right: 2px;
  border-radius: 13px;
  background: #ebebeb;
}

/* Bookmarks */
.bookmarks {
  flex: none;
  display: flex;
  align-items: center;
  height: 26px;
  padding: 0 16px 0 2px;
}

.bookmarks a {
  display: flex;
  align-items: center;
  gap: 5px;
  margin-right: 18px;
}

.bookmarks .sep {
  margin-left: 3px;
}

.bookmarks .import {
  margin: 0 10px;
}

.bookmarks .folder {
  margin-left: 14px;
}

.bookmarks .google {
  gap: 6px;
}

.bookmarks .last {
  margin-left: auto;
}

.bookmarks .others {
  margin: 0 0 0 14px;
}

/* PDF toolbar */
.pdf-bar {
  position: relative;
  z-index: 2;
  flex: none;
  display: flex;
  height: 36px;
  padding: 3px 14px 0 6px;
  border-bottom: 1px solid #e0e0e0;
  font-family: "Open Sans", "Noto Sans", "Noto Sans CJK JP", sans-serif;
  font-size: 11px;
}

.group {
  display: flex;
  align-items: center;
}

.group > .sep {
  margin: 0 4px;
}

.group > .tight {
  margin-left: 3px;
}

.tool {
  width: 30px;
  height: 28px;
}

.translate {
  width: 28px;
}

.pen {
  width: 28px;
}

.chevron {
  width: 18px;
  height: 28px;
  margin-right: 3px;
}

.draw {
  align-self: stretch;
  gap: 10px;
  width: 111px;
  padding-left: 12px;
  border-bottom: 2px solid #2867a6;
  background: #e3e3e3;
}

.draw-more {
  display: flex;
  align-items: center;
  justify-content: center;
  align-self: stretch;
  width: 30px;
  margin-left: -4px;
  background: #d9d9d9;
}

.copilot {
  gap: 8px;
  margin-left: 7px;
}

.paging {
  margin-left: 67px;
}

.paging > .sep {
  margin: 0 3px;
}

.paging .fit {
  width: 32px;
}

.page-number {
  width: 33px;
  height: 26px;
  border: 1px solid #d0d0d0;
  background: #fff;
  text-align: center;
  font-size: 10px;
}

.page-count {
  width: 36px;
  margin-left: 8px;
  font-size: 10px;
}

.actions {
  margin-left: auto;
}

.actions .faint {
  background: #e5e5e5;
}

.acrobat {
  margin-left: 9px;
}

/* Pen options */
.pen-panel {
  position: absolute;
  top: 33px;
  left: 19px;
  width: 217px;
  padding: 14px 13px 12px;
  border-radius: 2px;
  background: #fff;
  box-shadow: 0 6px 14px rgba(0, 0, 0, 0.25);
}

.pen-panel h2 {
  margin: 0;
  font-size: 11px;
  font-weight: 600;
  line-height: 16px;
}

.swatches {
  display: grid;
  grid-template-columns: repeat(6, 24px);
  justify-content: space-between;
  row-gap: 9px;
  margin: 7px 0 15px;
}

.swatches input {
  appearance: none;
  width: 24px;
  height: 24px;
  margin: 0;
  border: 1px solid rgba(70, 70, 70, 0.6);
  border-radius: 50%;
}

.swatches input:checked {
  border: 2px solid #2a6da8;
  box-shadow: inset 0 0 0 2px #fff;
}

.black { background: #000; }
.gray-1 { background: #555; }
.gray-2 { background: #808080; }
.gray-3 { background: #a9a9a9; }
.gray-4 { background: #d3d3d3; }
.white { background: #fff; }
.burgundy { background: #a4005f; }
.red { background: #dc0020; }
.orange { background: #eb4c05; }
.amber { background: #f3a805; }
.gold { background: #f8d40a; }
.yellow { background: #faf80c; }
.lime { background: #a6ff20; }
.green { background: #2cff05; }
.emerald { background: #0d9255; }
.teal { background: #0bb7c5; }
.blue { background: #0848de; }
.indigo { background: #3500b0; }
.violet { background: #5f00c7; }
.purple { background: #51007c; }
.skin { background: #f2d3c6; }
.tan { background: #b68d67; }
.brown { background: #835131; }
.umber { background: #573735; }
.pink { background: #f56bff; }
.peach { background: #f7c280; }
.lemon { background: #fdff80; }
.mint { background: #86ff9f; }
.sky { background: #84dafa; }
.lavender { background: #b9aaf6; }

.preview {
  display: block;
  margin-bottom: 19px;
  stroke: #000;
  stroke-width: 2;
}

.thickness {
  appearance: none;
  display: block;
  width: 175px;
  height: 14px;
  margin: 9px 0 0 7px;
}

.thickness::-webkit-slider-runnable-track {
  height: 4px;
  border-radius: 2px;
  background: #bdbdbd;
}

.thickness::-webkit-slider-thumb {
  appearance: none;
  width: 13px;
  height: 13px;
  margin-top: -5px;
  border-radius: 50%;
  background: #2b2b2b;
}

.ends {
  display: flex;
  justify-content: space-between;
  padding-left: 4px;
  font-size: 8px;
  line-height: 12px;
}

.cursor {
  position: absolute;
  top: 21px;
  left: 208px;
}

/* Document */
.viewer {
  flex: 1;
  min-height: 0;
  display: flex;
  margin: 0 3px;
  overflow: hidden;
  border-radius: 0 0 7px 7px;
  background: #fafafa;
}

.pages {
  position: relative;
  flex: 1;
  display: flex;
  flex-direction: column;
  align-items: center;
  gap: 13px;
  overflow: hidden;
  background: #e4e4e4;
}

.page {
  flex: none;
  background: #fff;
}

.sheet {
  display: block;
}

.ink {
  stroke: #000;
  stroke-width: 7;
  stroke-linecap: round;
  stroke-linejoin: round;
}

.acrobat-badge {
  position: absolute;
  right: 11px;
  bottom: 27px;
  width: 20px;
  height: 20px;
  border-radius: 3px;
  background: #d69ca3;
}

.scrollbar {
  display: flex;
  flex-direction: column;
  align-items: center;
  width: 13px;
  padding: 4px 0;
}

.scrollbar path {
  fill: #777;
  stroke: none;
}

.thumb {
  width: 7px;
  height: 24px;
  margin: 37px 0 auto;
  border-radius: 4px;
  background: #858585;
}

/* Taskbar */
.taskbar {
  flex: none;
  display: flex;
  justify-content: space-between;
  align-items: center;
  height: 40px;
  margin-top: 3px;
  padding: 0 17px 2px 13px;
  border-top: 1px solid #e2e2e2;
  background: #f1f3f3;
}

.apps {
  display: flex;
  justify-content: space-between;
  width: 287px;
}

.apps button {
  position: relative;
  width: 30px;
  height: 34px;
}

.running::after {
  content: "";
  position: absolute;
  bottom: 0;
  width: 5px;
  height: 3px;
  border-radius: 2px;
  background: #858585;
}

.apps .active {
  border-radius: 3px;
  background: #fff;
}

.active::after {
  width: 13px;
  background: #176ca7;
}

.weather {
  margin-top: 6px;
}

.temp {
  position: absolute;
  top: 3px;
  right: 2px;
  font-size: 9px;
  color: #222;
}

.tray {
  display: flex;
  align-items: center;
  color: #222;
}

.tray > svg {
  margin-right: 6px;
}

.tray .mic {
  margin: 0 17px 0 5px;
}

.tray .pen-icon {
  margin-right: 15px;
}

.lang {
  width: 34px;
}

.tray .battery {
  margin-right: 12px;
}

.clock {
  display: flex;
  flex-direction: column;
  align-items: flex-end;
  line-height: 13px;
}

.count {
  width: 13px;
  height: 13px;
  margin-left: 6px;
  border-radius: 50%;
  background: #147fb8;
  color: #fff;
  font-size: 9px;
  line-height: 13px;
  text-align: center;
}
```
